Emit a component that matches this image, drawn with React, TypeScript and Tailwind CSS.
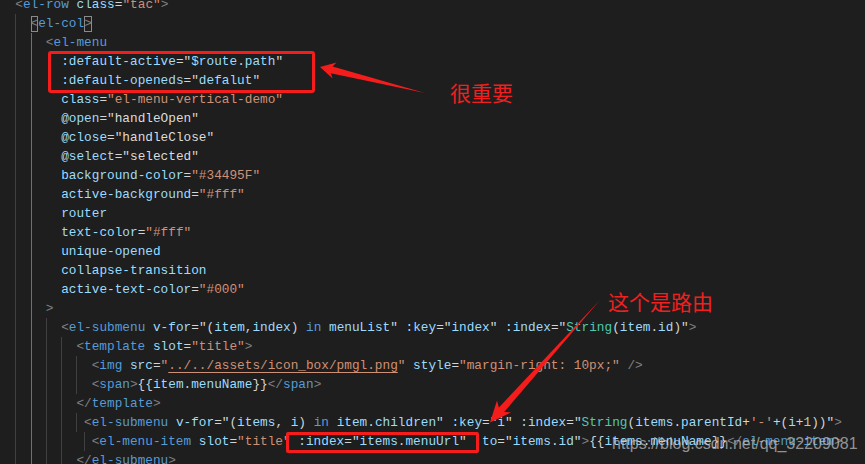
import React from "react";

type Tok = [string, string];

interface Line {
    indent: number;
    guides: number[];
    tokens: Tok[];
}

// token colours, VS Code dark+
const colors: Record<string, string> = {
    p: "text-[#808080]",
    t: "text-[#569cd6]",
    a: "text-[#9cdcfe]",
    e: "text-[#d4d4d4]",
    s: "text-[#ce9178]",
    v: "text-[#9cdcfe]",
    k: "text-[#569cd6]",
    c: "text-[#4ec9b0]",
    n: "text-[#b5cea8]",
    w: "text-[#dcdcdc]",
    b: "text-[#808080] self-center h-[16px] leading-[16px] shadow-[inset_0_0_0_1px_#8a8a8a]",
    u: "text-[#ce9178] underline decoration-[#ce9178] underline-offset-[3px]",
};

const g8 = [2, 4];

const lines: Line[] = [
    { indent: 2, guides: [], tokens: [["<", "p"], ["el-row", "t"], [" ", "e"], ["class", "a"], ["=", "e"], ['"tac"', "s"], [">", "p"]] },
    { indent: 4, guides: [2], tokens: [["<", "b"], ["el-col", "t"], [">", "b"]] },
    { indent: 6, guides: [2, 4], tokens: [["<", "p"], ["el-menu", "t"]] },
    { indent: 8, guides: g8, tokens: [[":default-active", "a"], ["=", "e"], ['"', "e"], ["$route", "v"], [".", "e"], ["path", "v"], ['"', "e"]] },
    { indent: 8, guides: g8, tokens: [[":default-openeds", "a"], ["=", "e"], ['"', "e"], ["defalut", "v"], ['"', "e"]] },
    { indent: 8, guides: g8, tokens: [["class", "a"], ["=", "e"], ['"el-menu-vertical-demo"', "s"]] },
    { indent: 8, guides: g8, tokens: [["@open", "a"], ["=", "e"], ['"', "e"], ["handleOpen", "w"], ['"', "e"]] },
    { indent: 8, guides: g8, tokens: [["@close", "a"], ["=", "e"], ['"', "e"], ["handleClose", "w"], ['"', "e"]] },
    { indent: 8, guides: g8, tokens: [["@select", "a"], ["=", "e"], ['"', "e"], ["selected", "w"], ['"', "e"]] },
    { indent: 8, guides: g8, tokens: [["background-color", "a"], ["=", "e"], ['"#34495F"', "s"]] },
    { indent: 8, guides: g8, tokens: [["active-background", "a"], ["=", "e"], ['"#fff"', "s"]] },
    { indent: 8, guides: g8, tokens: [["router", "a"]] },
    { indent: 8, guides: g8, tokens: [["text-color", "a"], ["=", "e"], ['"#fff"', "s"]] },
    { indent: 8, guides: g8, tokens: [["unique-opened", "a"]] },
    { indent: 8, guides: g8, tokens: [["collapse-transition", "a"]] },
    { indent: 8, guides: g8, tokens: [["active-text-color", "a"], ["=", "e"], ['"#000"', "s"]] },
    { indent: 6, guides: [2, 4], tokens: [[">", "p"]] },
    {
        indent: 8,
        guides: [2, 4, 6],
        tokens: [
            ["<", "p"], ["el-submenu", "t"], [" ", "e"], ["v-for", "a"], ["=", "e"], ['"(', "e"], ["item", "v"], [",", "e"], ["index", "v"], [") ", "e"], ["in", "k"], [" ", "e"], ["menuList", "v"], ['" ', "e"],
            [":key", "a"], ["=", "e"], ['"', "e"], ["index", "v"], ['" ', "e"], [":index", "a"], ["=", "e"], ['"', "e"], ["String", "c"], ["(", "e"], ["item", "v"], [".", "e"], ["id", "v"], [')"', "e"], [">", "p"],
        ],
    },
    { indent: 10, guides: [2, 4, 6, 8], tokens: [["<", "p"], ["template", "t"], [" ", "e"], ["slot", "a"], ["=", "e"], ['"title"', "s"], [">", "p"]] },
    {
        indent: 12,
        guides: [2, 4, 6, 8, 10],
        tokens: [["<", "p"], ["img", "t"], [" ", "e"], ["src", "a"], ["=", "e"], ['"', "s"], ["../../assets/icon_box/pmgl.png", "u"], ['"', "s"], [" ", "e"], ["style", "a"], ["=", "e"], ['"margin-right: 10px;"', "s"], [" ", "e"], ["/>", "p"]],
    },
    { indent: 12, guides: [2, 4, 6, 8, 10], tokens: [["<", "p"], ["span", "t"], [">", "p"], ["{{", "e"], ["item", "v"], [".", "e"], ["menuName", "v"], ["}}", "e"], ["</", "p"], ["span", "t"], [">", "p"]] },
    { indent: 10, guides: [2, 4, 6, 8], tokens: [["</", "p"], ["template", "t"], [">", "p"]] },
    {
        indent: 11,
        guides: [2, 4, 6, 8, 10],
        tokens: [
            ["<", "p"], ["el-submenu", "t"], [" ", "e"], ["v-for", "a"], ["=", "e"], ['"(', "e"], ["items", "v"], [", ", "e"], ["i", "v"], [") ", "e"], ["in", "k"], [" ", "e"], ["item", "v"], [".", "e"], ["children", "v"], ['" ', "e"],
            [":key", "a"], ["=", "e"], ['"', "e"], ["i", "v"], ['" ', "e"], [":index", "a"], ["=", "e"], ['"', "e"], ["String", "c"], ["(", "e"], ["items", "v"], [".", "e"], ["parentId", "v"], ["+", "e"], ["'-'", "s"], ["+(", "e"], ["i", "v"], ["+", "e"], ["1", "n"], ['))"', "e"], [">", "p"],
        ],
    },
    {
        indent: 12,
        guides: [2, 4, 6, 8, 11],
        tokens: [
            ["<", "p"], ["el-menu-item", "t"], [" ", "e"], ["slot", "a"], ["=", "e"], ['"title"', "s"], [" ", "e"], [":index", "a"], ["=", "e"], ['"', "e"], ["items", "v"], [".", "e"], ["menuUrl", "v"], ['" ', "e"],
            [":to", "a"], ["=", "e"], ['"', "e"], ["items", "v"], [".", "e"], ["id", "v"], ['"', "e"], [">", "p"], ["{{", "e"], ["items", "v"], [".", "e"], ["menuName", "v"], ["}}", "e"], ["</", "p"], ["el-menu-item", "t"], [">", "p"],
        ],
    },
    { indent: 10, guides: [2, 4, 6, 8], tokens: [["</", "p"], ["el-submenu", "t"], [">", "p"]] },
];

const CodeLine: React.FC<{ line: Line }> = ({ line }) => (
    <div className="flex h-[19px] shrink-0 items-stretch whitespace-pre leading-[19px]">
        {Array.from({ length: line.indent }).map((_, i) => (
            <span
                key={i}
                className={
                    line.guides.includes(i)
                        ? i === 4
                            ? "inline-block w-[1ch] shrink-0 border-l border-[#707070]"
                            : "inline-block w-[1ch] shrink-0 border-l border-[#404040]"
                        : "inline-block w-[1ch] shrink-0"
                }
            />
        ))}
        {line.tokens.map(([text, kind], i) => (
            <span key={i} className={colors[kind]}>
                {text}
            </span>
        ))}
    </div>
);

export default function App() {
    return (
        <div className="relative h-[464px] w-[865px] overflow-hidden bg-[#1e1e1e]">
            <div className="-mt-[5px] flex flex-col font-['Liberation_Mono',monospace] text-[12.75px]">
                {lines.map((line, i) => (
                    <CodeLine key={i} line={line} />
                ))}
            </div>

            {/* annotations */}
            <div className="absolute left-[48px] top-[51px] h-[42px] w-[267px] rounded-[3px] border-[3px] border-[#f51c1c]" />
            <div className="absolute left-[286px] top-[432px] h-[21px] w-[193px] rounded-[2px] border-[3px] border-[#f51c1c]" />

            <svg className="pointer-events-none absolute inset-0" width="865" height="464" viewBox="0 0 865 464">
                <polygon
                    fill="#f51c1c"
                    points="320,67 336.5,62.5 332.6,66.4 425,93 330.7,73.3 332.6,78.6"
                />
                <polygon
                    fill="#f51c1c"
                    points="490,422.5 497,400.5 498.9,407.5 600,300 504.1,412.1 511.2,412.3"
                />
            </svg>

            <div className="absolute left-[450px] top-[82px] font-['Noto_Sans_CJK_SC',sans-serif] text-[21px] leading-none text-[#f02020]">
                很重要
            </div>
            <div className="absolute left-[608px] top-[291px] font-['Noto_Sans_CJK_SC',sans-serif] text-[21px] leading-none text-[#f02020]">
                这个是路由
            </div>

            {/* watermark */}
            <div className="absolute left-[612px] top-[436px] font-['Liberation_Sans',Arial,sans-serif] text-[16px] leading-none text-[#c8c8c8]/70">
                https://blog.csdn.net/qq_32209081
            </div>
        </div>
    );
}
